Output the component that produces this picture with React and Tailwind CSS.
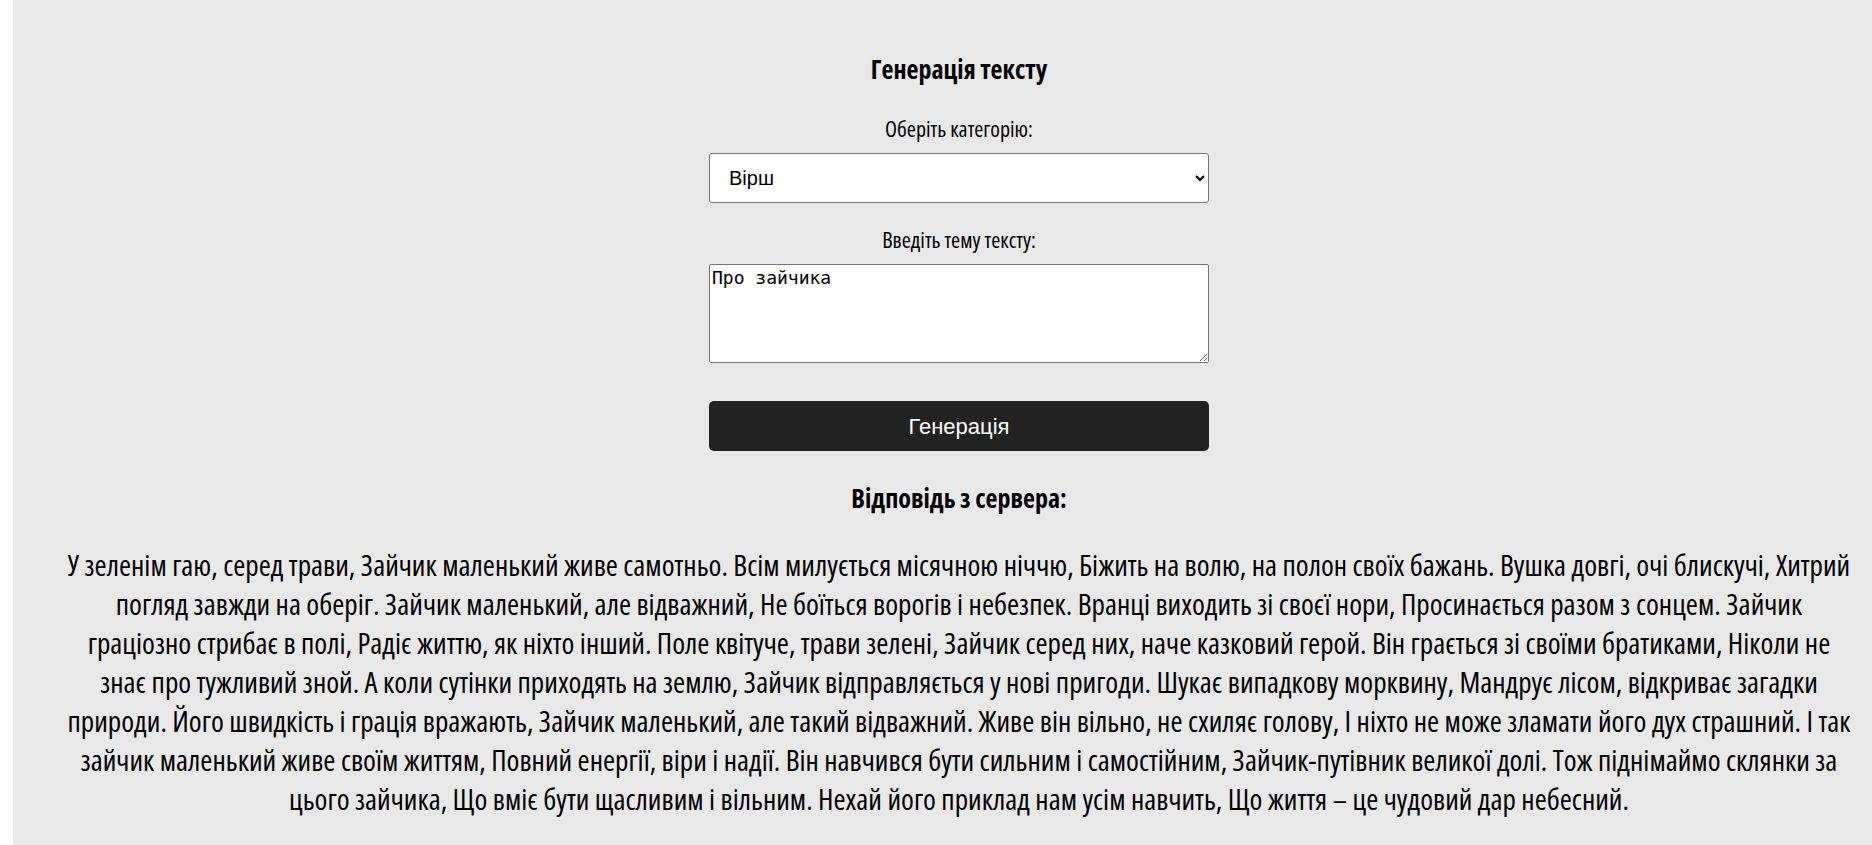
const ANSWER_LINES = [
  'У зеленім гаю, серед трави, Зайчик маленький живе самотньо. Всім милується місячною ніччю, Біжить на волю, на полон своїх бажань. Вушка довгі, очі блискучі, Хитрий',
  'погляд завжди на оберіг. Зайчик маленький, але відважний, Не боїться ворогів і небезпек. Вранці виходить зі своєї нори, Просинається разом з сонцем. Зайчик',
  'граціозно стрибає в полі, Радіє життю, як ніхто інший. Поле квітуче, трави зелені, Зайчик серед них, наче казковий герой. Він грається зі своїми братиками, Ніколи не',
  'знає про тужливий зной. А коли сутінки приходять на землю, Зайчик відправляється у нові пригоди. Шукає випадкову морквину, Мандрує лісом, відкриває загадки',
  'природи. Його швидкість і грація вражають, Зайчик маленький, але такий відважний. Живе він вільно, не схиляє голову, І ніхто не може зламати його дух страшний. І так',
  'зайчик маленький живе своїм життям, Повний енергії, віри і надії. Він навчився бути сильним і самостійним, Зайчик-путівник великої долі. Тож піднімаймо склянки за',
  'цього зайчика, Що вміє бути щасливим і вільним. Нехай його приклад нам усім навчить, Що життя – це чудовий дар небесний.',
]

export default function App() {
  return (
    <div className="w-full overflow-hidden bg-white">
      <div className="ml-[13px] w-[1892px] min-h-[845px] bg-[#e8e8e8] pt-[50px] pb-[30px] text-black font-['Open_Sans',sans-serif] font-stretch-[75%]">
        <div className="mx-auto w-[500px] flex flex-col items-center">
          <h2 className="text-[26px] leading-[38px] font-bold">Генерація тексту</h2>
          <label className="mt-[25px] text-[22px] leading-[30px]">Оберіть категорію:</label>
          <select
            defaultValue="poem"
            className="mt-[10px] h-[50px] w-full rounded-[3px] border border-[#767676] bg-white px-[15px] text-[20px] font-['Liberation_Sans',Arial,sans-serif] font-stretch-normal"
          >
            <option value="poem">Вірш</option>
            <option value="story">Оповідання</option>
            <option value="tale">Казка</option>
          </select>
          <label className="mt-[21px] text-[22px] leading-[30px]">Введіть тему тексту:</label>
          <textarea
            defaultValue="Про зайчика"
            className="mt-[10px] h-[99px] w-full rounded-[2px] border border-[#767676] bg-white p-[2px] text-[18px] leading-[22px] font-['DejaVu_Sans_Mono',monospace] font-stretch-normal"
          />
          <button className="mt-[38px] h-[50px] w-full rounded-[5px] bg-[#222222] text-[22px] text-white font-['Liberation_Sans',Arial,sans-serif] font-stretch-normal">
            Генерація
          </button>
          <h2 className="mt-[28px] text-[26px] leading-[38px] font-bold">Відповідь з сервера:</h2>
        </div>
        <p className="mt-[29px] text-center text-[29.25px] leading-[39px]">
          {ANSWER_LINES.map((line, i) => (
            <span key={i} className="block whitespace-nowrap">{line}</span>
          ))}
        </p>
      </div>
    </div>
  )
}
